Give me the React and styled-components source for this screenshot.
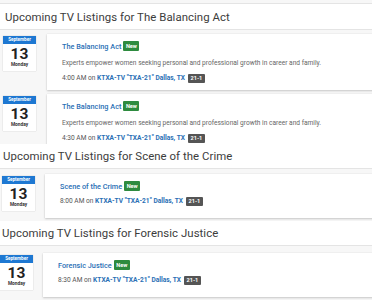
import React from "react";
import styled, { createGlobalStyle } from "styled-components";

const Global = createGlobalStyle`
  html, body { margin: 0; padding: 0; background: #f7f7f7; overflow: hidden; }
  body { font-family: Roboto, "Liberation Sans", Arial, sans-serif; width: 372px; }
`;

const Page = styled.div`
  padding-top: 3px;
  display: flex;
  flex-direction: column;
`;

const Section = styled.section`
  position: relative;
  background: #f7f7f7;
  margin-top: ${(p) => -p.$pull}px;
`;

const Header = styled.h2`
  margin: 0;
  padding-left: ${(p) => p.$indent}px;
  background: #fff;
  border-top: ${(p) => (p.$first ? "1px solid #e4e4e4" : "none")};
  border-bottom: 1px solid #e4e4e4;
  height: ${(p) => (p.$first ? 25 : 24)}px;
  display: flex;
  align-items: center;
  font-size: 11.4px;
  font-weight: 400;
  color: #3c3c3c;
  letter-spacing: 0.05px;
`;

const List = styled.div`
  display: flex;
  flex-direction: column;
  gap: 4px;
  padding: ${(p) => p.$top}px 0 3px ${(p) => p.$indent}px;
`;

const Row = styled.div`
  display: flex;
  align-items: flex-start;
  gap: ${(p) => p.$gap}px;
  margin-right: -8px;
`;

const DateBadge = styled.div`
  width: 33px;
  flex: none;
  margin-top: 2px;
  background: #fff;
  box-shadow: 0 0 1px rgba(0, 0, 0, 0.25);
  display: flex;
  flex-direction: column;
  align-items: center;
  padding-bottom: 3px;
`;

const Month = styled.div`
  align-self: stretch;
  background: #1e78d2;
  color: #fff;
  font-size: 4.6px;
  font-weight: 700;
  text-align: center;
  height: 8px;
  line-height: 8px;
`;

const Day = styled.div`
  font-size: 15.5px;
  font-weight: 700;
  color: #222;
  line-height: 15px;
  margin-top: 3px;
`;

const Weekday = styled.div`
  font-size: 4.8px;
  font-weight: 700;
  color: #333;
  line-height: 6px;
`;

const Card = styled.div`
  flex: 1;
  min-height: 44px;
  box-sizing: border-box;
  background: #fff;
  box-shadow: 0 1px 2px rgba(0, 0, 0, 0.18), 0 0 1px rgba(0, 0, 0, 0.12);
  padding: 6px 15px 6px;
  display: flex;
  flex-direction: column;
  gap: 3px;
`;

const TitleLine = styled.div`
  display: flex;
  align-items: center;
  gap: 2px;
  height: 12px;
`;

const Title = styled.a`
  font-size: 7.3px;
  font-weight: 500;
  color: #2a6fb5;
  text-decoration: none;
`;

const NewTag = styled.span`
  background: #2e8b3f;
  color: #fff;
  font-size: 5.6px;
  font-weight: 700;
  padding: 0 2.5px;
  height: 10px;
  line-height: 10px;
  border-radius: 1px;
`;

const Desc = styled.div`
  margin-top: 2px;
  font-size: 6.6px;
  color: #666;
  line-height: 12px;
`;

const Meta = styled.div`
  display: flex;
  align-items: center;
  font-size: 6.6px;
  color: #555;
  height: 12px;
  white-space: pre;
`;

const Station = styled.a`
  color: #2a6fb5;
  font-weight: 700;
  text-decoration: none;
`;

const Channel = styled.span`
  margin-left: 3px;
  background: #555;
  color: #fff;
  font-size: 5.6px;
  font-weight: 700;
  padding: 0 2.5px;
  height: 9px;
  line-height: 9px;
  border-radius: 1px;
`;

const sections = [
  {
    name: "The Balancing Act",
    head: 5,
    indent: 3,
    gap: 11,
    top: 4,
    pull: 0,
    items: [
      { time: "4:00 AM", desc: "Experts empower women seeking personal and professional growth in career and family." },
      { time: "4:30 AM", desc: "Experts empower women seeking personal and professional growth in career and family." },
    ],
  },
  { name: "Scene of the Crime", head: 3, indent: 2, gap: 10, top: 5, pull: 9, items: [{ time: "8:00 AM" }] },
  { name: "Forensic Justice", head: 2, indent: 0, gap: 10, top: 7, pull: 0, items: [{ time: "8:30 AM" }] },
];

export default function App() {
  return (
    <Page>
      <Global />
      {sections.map((s, i) => (
        <Section key={s.name} $pull={s.pull}>
          <Header $first={i === 0} $indent={s.head}>
            Upcoming TV Listings for {s.name}
          </Header>
          <List $indent={s.indent} $top={s.top}>
            {s.items.map((it, j) => (
              <Row key={j} $gap={s.gap}>
                <DateBadge>
                  <Month>September</Month>
                  <Day>13</Day>
                  <Weekday>Monday</Weekday>
                </DateBadge>
                <Card>
                  <TitleLine>
                    <Title href="#">{s.name}</Title>
                    <NewTag>New</NewTag>
                  </TitleLine>
                  {it.desc && <Desc>{it.desc}</Desc>}
                  <Meta>
                    {it.time} on <Station href="#">KTXA-TV "TXA-21" Dallas, TX</Station>
                    <Channel>21-1</Channel>
                  </Meta>
                </Card>
              </Row>
            ))}
          </List>
        </Section>
      ))}
    </Page>
  );
}
